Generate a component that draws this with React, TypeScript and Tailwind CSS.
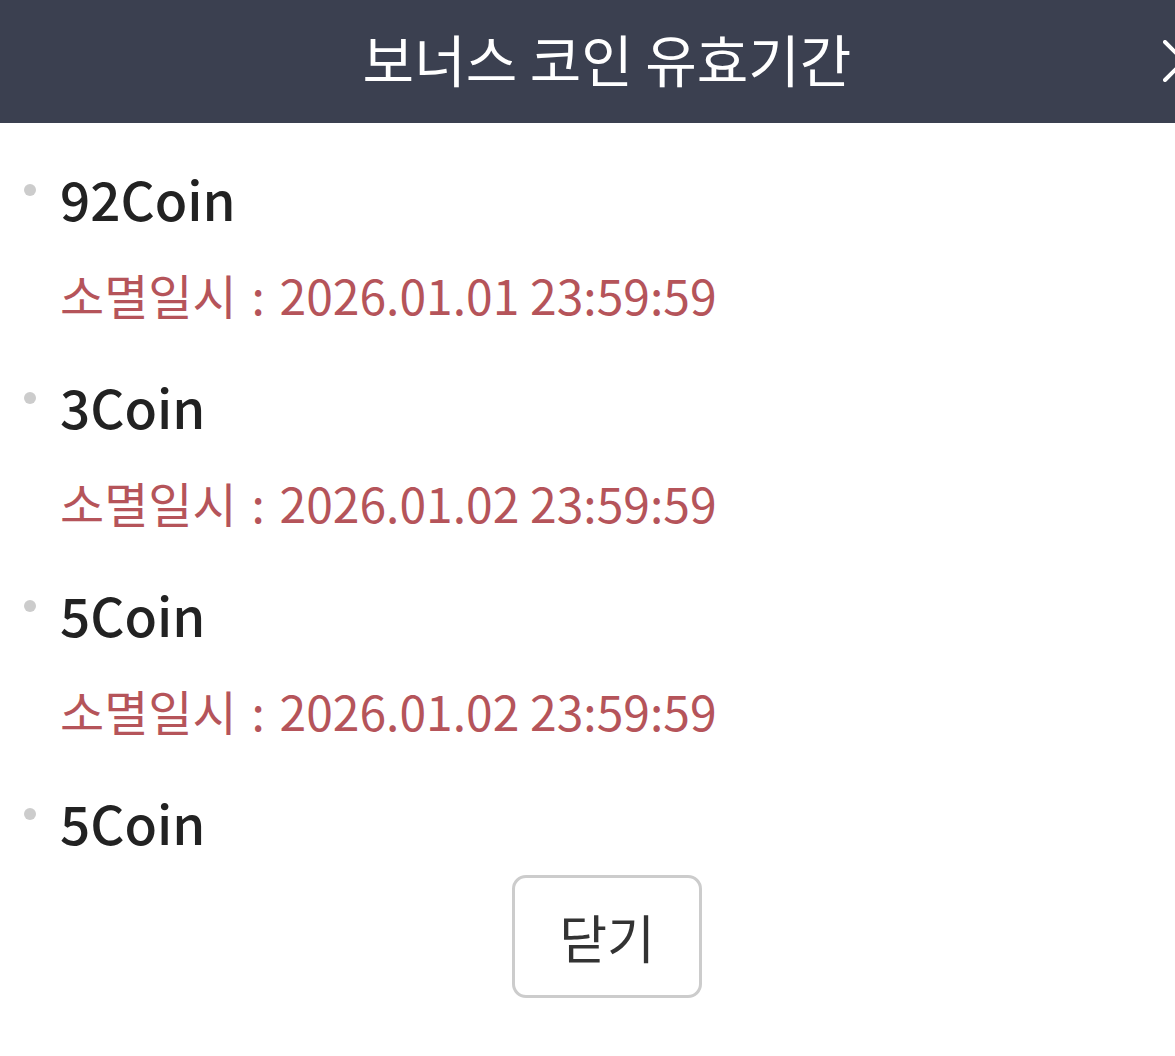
const items: { name: string; expire?: string }[] = [
  { name: '92Coin', expire: '2026.01.01 23:59:59' },
  { name: '3Coin', expire: '2026.01.02 23:59:59' },
  { name: '5Coin', expire: '2026.01.02 23:59:59' },
  { name: '5Coin' },
]

export default function App() {
  return (
    <div className="w-[1175px] h-[1056px] overflow-hidden bg-white">
      <div
        className="w-[1214px] bg-white"
        style={{ fontFamily: '"Noto Sans CJK KR", "Noto Sans", sans-serif' }}
      >
        <div className="relative h-[123px] bg-[#3b4050] flex items-center justify-center">
          <h1 className="-mt-[8px] text-[56px] leading-none text-white font-normal">보너스 코인 유효기간</h1>
          <button className="absolute right-[9px] top-[40px] w-[42px] h-[42px]">
            <svg viewBox="0 0 42 42" className="w-full h-full" fill="none" stroke="white" strokeWidth="4" strokeLinecap="round">
              <path d="M2 2 L40 40 M40 2 L2 40" />
            </svg>
          </button>
        </div>

        <ul className="h-[752px] overflow-hidden pt-[35px]">
          {items.map((item, i) => (
            <li key={i} className="relative pl-[60px] h-[208px]">
              <span className="absolute left-[24px] top-[26px] w-[12px] h-[12px] rounded-full bg-[#cccccc]" />
              <p className="text-[53px] leading-[80px] font-medium text-[#222222]">{item.name}</p>
              {item.expire && (
                <p className="mt-[16px] text-[48px] leading-[80px] text-[#b5545a]">
                  소멸일시<span className="px-[4px]"> : </span>{item.expire}
                </p>
              )}
            </li>
          ))}
        </ul>

        <div className="flex justify-center">
          <button className="w-[190px] h-[123px] border-[3px] border-[#cccccc] rounded-[14px] bg-white text-[52px] text-[#333333]">
            닫기
          </button>
        </div>
      </div>
    </div>
  )
}
